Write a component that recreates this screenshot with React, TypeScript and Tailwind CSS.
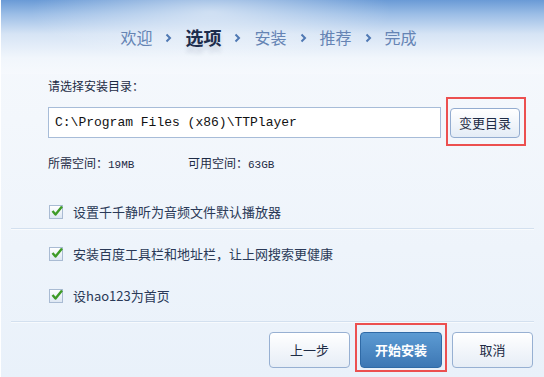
const steps = ["欢迎", "选项", "安装", "推荐", "完成"];
const options = [
  "设置千千静听为音频文件默认播放器",
  "安装百度工具栏和地址栏，让上网搜索更健康",
  "设hao123为首页",
];

function Chevron() {
  return (
    <svg width="7" height="10" viewBox="0 0 7 10" className="mx-[13px] mt-[2px]">
      <path d="M1.5 1.5 L5 5 L1.5 8.5" fill="none" stroke="#4f78b3" strokeWidth="2" />
    </svg>
  );
}

function Checkbox() {
  return (
    <span className="relative h-[14px] w-[14px] shrink-0 border border-[#a9bbd3] bg-[linear-gradient(#ffffff,#dde7f3)]">
      <svg width="14" height="14" viewBox="0 0 14 14" className="absolute left-[0px] top-[-2px]">
        <path d="M2.5 7 L5.5 10.5 L12 2.5" fill="none" stroke="#3e9b27" strokeWidth="2.4" strokeLinejoin="round" />
      </svg>
    </span>
  );
}

export default function App() {
  return (
    <div className="relative h-[377px] w-[544px] overflow-hidden border-l border-white bg-[linear-gradient(180deg,#f6f9fd_0px,#f3f7fc_120px,#e9f1fa_377px)] font-['Noto_Sans_CJK_SC',sans-serif] text-[#1d2b45]">
      <header className="flex h-[74px] items-center justify-center bg-[radial-gradient(ellipse_180px_50px_at_210px_12px,rgba(255,255,255,0.55),rgba(255,255,255,0)),linear-gradient(180deg,#6a9ad6_0px,#9bbde6_14px,#d6e4f5_34px,#f1f6fc_58px,#f6f9fd_74px)] pr-[8px]">
        {steps.map((s, i) => (
          <div key={s} className="flex items-center">
            {i > 0 && <Chevron />}
            {i === 1 ? (
              <span className="text-[18px] font-bold leading-[24px] text-[#1c2c4c] [text-shadow:0_6px_4px_rgba(28,44,76,0.12)]">
                {s}
              </span>
            ) : (
              <span className="text-[16px] leading-[24px] text-[#6584b4]">{s}</span>
            )}
          </div>
        ))}
      </header>

      <section className="pl-[47px]">
        <p className="text-[12px] leading-[24px]">请选择安装目录：</p>
        <div className="mt-[9px] flex h-[31px] items-center gap-[9px]">
          <div className="flex h-full w-[393px] shrink-0 items-center border border-[#a7bcd8] bg-white pl-[6px] font-['Liberation_Mono',monospace] text-[13px] text-[#111]">
            C:\Program Files (x86)\TTPlayer
          </div>
          <button className="h-[30px] w-[70px] shrink-0 rounded-[4px] border border-[#93acd0] bg-[linear-gradient(#ffffff,#e4ecf6)] text-[13px] text-[#1d2b45]">
            变更目录
          </button>
        </div>
        <div className="mt-[18px] flex h-[16px] items-center text-[12px]">
          <span className="w-[140px]">
            所需空间：<span className="font-['Liberation_Mono',monospace] text-[11px]">19MB</span>
          </span>
          <span>
            可用空间：<span className="font-['Liberation_Mono',monospace] text-[11px]">63GB</span>
          </span>
        </div>
      </section>

      <div className="mt-[24px] flex h-[32px] items-center gap-[10px] pl-[48px] text-[13px] text-[#2a3957]">
        <Checkbox />
        <span>{options[0]}</span>
      </div>
      <div className="mx-[10px] h-[2px] border-t border-[#d3e0ef] bg-white/60" />
      <div className="flex h-[47px] items-center gap-[10px] pl-[48px] text-[13px] text-[#2a3957]">
        <Checkbox />
        <span>{options[1]}</span>
      </div>
      <div className="flex h-[38px] items-center gap-[10px] pl-[48px] text-[13px] text-[#2a3957]">
        <Checkbox />
        <span>{options[2]}</span>
      </div>
      <div className="mx-[10px] mt-[6px] h-[2px] border-t border-[#d3e0ef] bg-white/60" />

      <div className="mt-[9px] flex justify-end gap-[10px] pr-[11px]">
        <button className="h-[36px] w-[81px] rounded-[4px] border border-[#97b0d2] bg-[linear-gradient(#ffffff,#e6edf6)] text-[13px] text-[#1d2b45]">
          上一步
        </button>
        <button className="h-[36px] w-[82px] rounded-[4px] border border-[#2f6aa6] bg-[linear-gradient(#5c9bd3,#3d77b4)] text-[13px] font-bold text-white">
          开始安装
        </button>
        <button className="h-[36px] w-[81px] rounded-[4px] border border-[#97b0d2] bg-[linear-gradient(#ffffff,#e6edf6)] text-[13px] text-[#1d2b45]">
          取消
        </button>
      </div>

      <div className="pointer-events-none absolute left-[445px] top-[97px] h-[49px] w-[80px] border-2 border-[#ec5050]" />
      <div className="pointer-events-none absolute left-[354px] top-[323px] h-[49px] w-[92px] border-2 border-[#ec5050]" />
    </div>
  );
}
